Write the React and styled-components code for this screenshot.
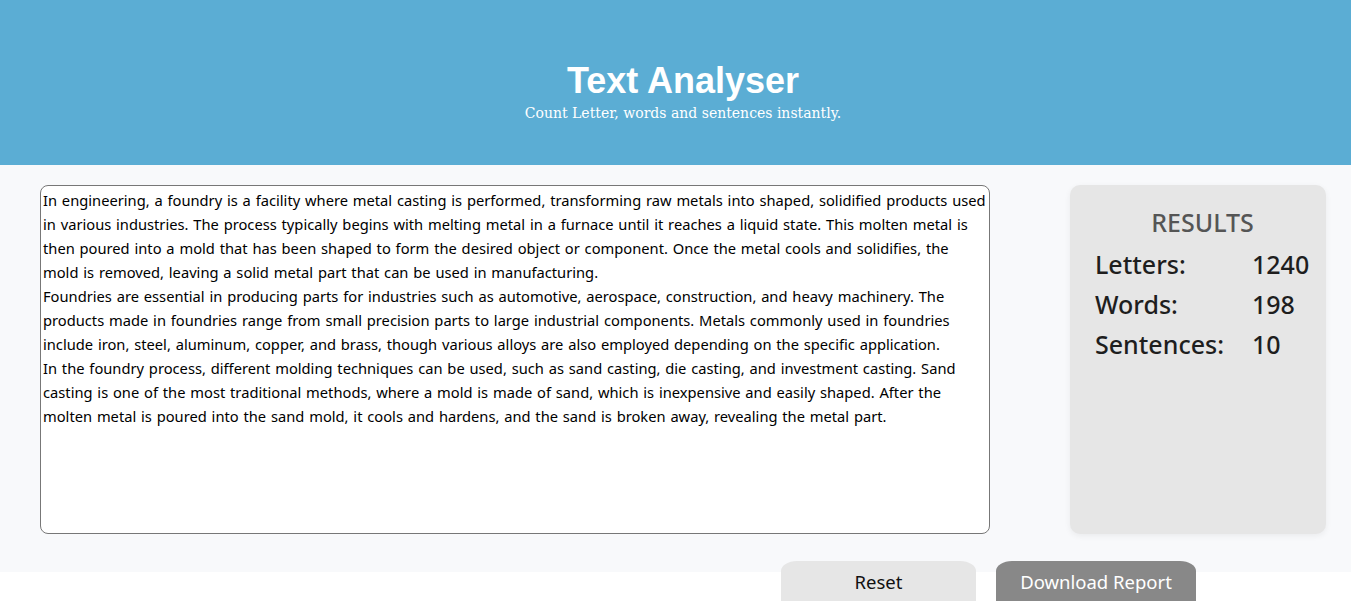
import React, { useState } from 'react';
import styled, { createGlobalStyle } from 'styled-components';

const GlobalStyle = createGlobalStyle`
    html, body {
        margin: 0;
        padding: 0;
        background: #ffffff;
        font-family: "Noto Sans", "Open Sans", sans-serif;
        overflow: hidden;
    }
`

const Header = styled.header`
    height: 165px;
    background: #5badd4;
    display: flex;
    flex-direction: column;
    align-items: center;
    justify-content: center;
    color: #ffffff;
    padding: 17px 0 0 15px;
    box-sizing: border-box;
`

const Title = styled.h1`
    margin: 0;
    font-family: "Liberation Sans", Arial, sans-serif;
    font-weight: bold;
    font-size: 36px;
    line-height: 40px;
    transform: scaleY(1.05);
`

const Subtitle = styled.p`
    margin: 3px 0 0 0;
    font-family: "DejaVu Serif", "Liberation Serif", serif;
    font-size: 14px;
    line-height: 20px;
`

const Main = styled.main`
    background: #f8f9fb;
    display: flex;
    align-items: stretch;
    gap: 80px;
    padding: 20px 25px 38px 40px;
`

const TextArea = styled.textarea`
    width: 950px;
    height: 349px;
    box-sizing: border-box;
    border: 1px solid #777777;
    border-radius: 8px;
    background: #ffffff;
    padding: 2px 2px 1px;
    resize: none;
    font-family: "Noto Sans", "Open Sans", sans-serif;
    font-size: 14.7px;
    word-spacing: 1px;
    line-height: 24px;
    color: #000000;
    outline: none;
`

const Panel = styled.section`
    width: 256px;
    height: 349px;
    box-sizing: border-box;
    background: #e6e6e6;
    border-radius: 10px;
    box-shadow: 0 2px 6px rgba(0, 0, 0, 0.06);
    padding: 17px 16px 0 25px;
`

const PanelTitle = styled.h2`
    margin: 0 0 2px 0;
    text-align: center;
    font-size: 25px;
    line-height: 40px;
    font-weight: 500;
    color: #555555;
`

const Row = styled.div`
    display: grid;
    grid-template-columns: 157px 1fr;
    font-size: 25px;
    line-height: 40px;
    font-weight: 500;
    color: #1e1e1e;
`

const Actions = styled.div`
    display: flex;
    gap: 20px;
    padding-left: 781px;
    margin-top: -11px;
    height: 51px;
    overflow: hidden;
`

const Button = styled.button`
    width: ${p => p.$w}px;
    height: 52px;
    border: none;
    border-radius: 16px / 10px;
    background: ${p => (p.$dark ? '#888888' : '#e6e6e6')};
    color: ${p => (p.$dark ? '#ffffff' : '#111111')};
    font-family: "Noto Sans", "Open Sans", sans-serif;
    font-size: 18.5px;
    padding: 0 0 12px 0;
    cursor: pointer;
`

const SAMPLE = `In engineering, a foundry is a facility where metal casting is performed, transforming raw metals into shaped, solidified products used in various industries. The process typically begins with melting metal in a furnace until it reaches a liquid state. This molten metal is then poured into a mold that has been shaped to form the desired object or component. Once the metal cools and solidifies, the mold is removed, leaving a solid metal part that can be used in manufacturing.
Foundries are essential in producing parts for industries such as automotive, aerospace, construction, and heavy machinery. The products made in foundries range from small precision parts to large industrial components. Metals commonly used in foundries include iron, steel, aluminum, copper, and brass, though various alloys are also employed depending on the specific application.
In the foundry process, different molding techniques can be used, such as sand casting, die casting, and investment casting. Sand casting is one of the most traditional methods, where a mold is made of sand, which is inexpensive and easily shaped. After the molten metal is poured into the sand mold, it cools and hardens, and the sand is broken away, revealing the metal part.`

const App = () => {
    const [text, setText] = useState(SAMPLE);

    return (
        <>
            <GlobalStyle />
            <Header>
                <Title>Text Analyser</Title>
                <Subtitle>Count Letter, words and sentences instantly.</Subtitle>
            </Header>
            <Main>
                <TextArea value={text} onChange={e => setText(e.target.value)} spellCheck={false} />
                <Panel>
                    <PanelTitle>RESULTS</PanelTitle>
                    <Row><span>Letters:</span><span>1240</span></Row>
                    <Row><span>Words:</span><span>198</span></Row>
                    <Row><span>Sentences:</span><span>10</span></Row>
                </Panel>
            </Main>
            <Actions>
                <Button $w={195} onClick={() => setText('')}>Reset</Button>
                <Button $w={200} $dark>Download Report</Button>
            </Actions>
        </>
    );
};

export default App;
